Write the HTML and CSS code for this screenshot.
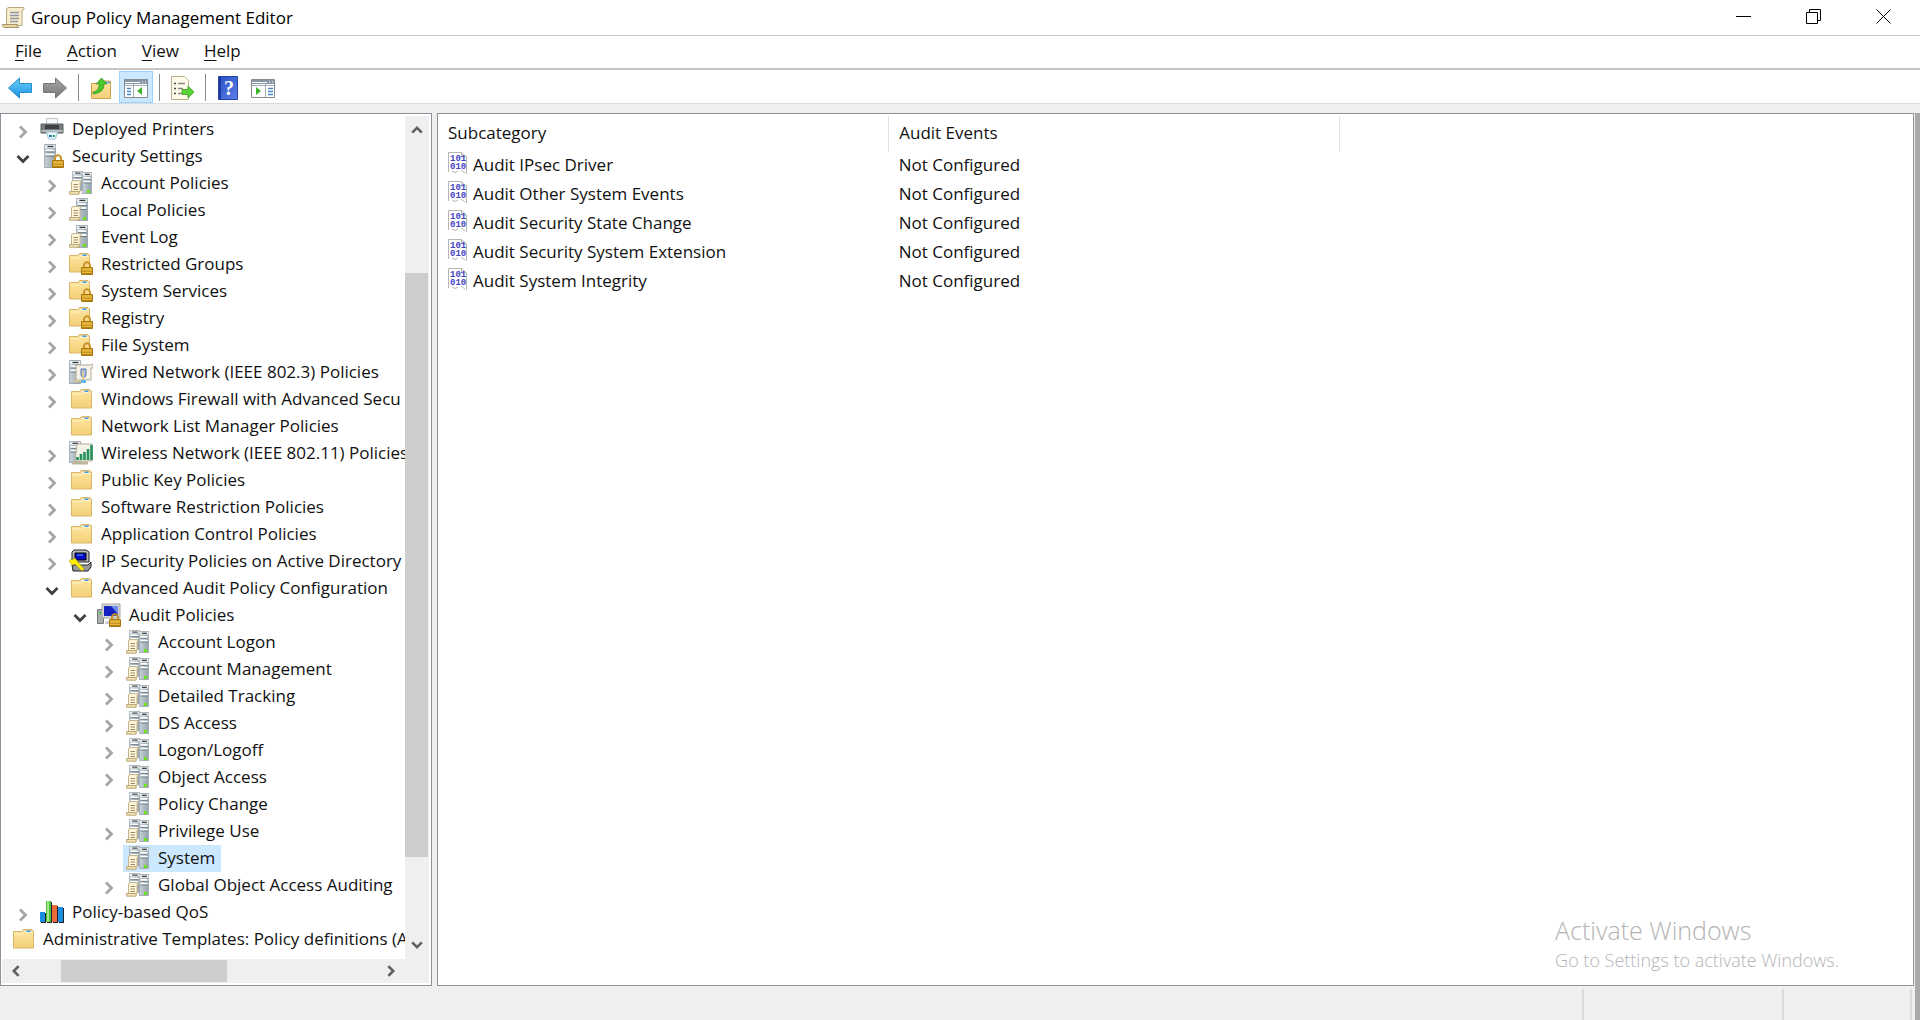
FILE: index.html
```html
<!DOCTYPE html>
<html lang="en">
<head>
<meta charset="utf-8">
<title>Group Policy Management Editor</title>
<link rel="stylesheet" href="styles.css">
</head>
<body>
<svg class="sprite" aria-hidden="true">
  <defs>
    <linearGradient id="gFolder" x1="0" y1="0" x2="0" y2="1"><stop offset="0" stop-color="#ffe6a0"/><stop offset="1" stop-color="#f3cf78"/></linearGradient>
    <linearGradient id="gServer" x1="0" y1="0" x2="1" y2="0"><stop offset="0" stop-color="#c9d3da"/><stop offset="1" stop-color="#93a2ab"/></linearGradient>
    <linearGradient id="gLock" x1="0" y1="0" x2="0" y2="1"><stop offset="0" stop-color="#e9b83a"/><stop offset="1" stop-color="#b07a08"/></linearGradient>
    <linearGradient id="gBack" x1="0" y1="0" x2="0" y2="1"><stop offset="0" stop-color="#6fd0fb"/><stop offset="1" stop-color="#1592e0"/></linearGradient>
    <linearGradient id="gFwd" x1="0" y1="0" x2="0" y2="1"><stop offset="0" stop-color="#a6a6a6"/><stop offset="1" stop-color="#777"/></linearGradient>
    <linearGradient id="gHelp" x1="0" y1="0" x2="1" y2="1"><stop offset="0" stop-color="#2a50c8"/><stop offset="1" stop-color="#5c80e6"/></linearGradient>
  </defs>
  <symbol id="right" viewBox="0 0 16 16"><path d="M5 2.500 10.500 8 5 13.500" fill="none" stroke="#a6a6a6" stroke-width="2.800"/></symbol>
  <symbol id="down" viewBox="0 0 16 16"><path d="M2.500 5 8 10.500 13.500 5" fill="none" stroke="#404040" stroke-width="2.800"/></symbol>
  <symbol id="lock" viewBox="0 0 12 14"><path d="M3 7V4.500a3 3.200 0 0 1 6 0V7" fill="none" stroke="#c9952a" stroke-width="2"/><path d="M.5 6.500h11v7H.5z" fill="url(#gLock)" stroke="#a87610"/><path d="M1 9h10M1 11.500h10" stroke="#f0c850" stroke-width=".8"/></symbol>
  <symbol id="folder" viewBox="0 0 24 24"><path d="M2.500 4.500h8l2-2h8.500l1.500 1.500v17h-20z" fill="url(#gFolder)" stroke="#d9b566"/><path d="M12 3.500h8.500l1 1.500H11z" fill="#fff" stroke="#d9b566" stroke-width=".5"/><path d="M15.500 4.300h4" stroke="#3f9bea" stroke-width="1.600"/><path d="M3 7h9l2-1.500h8" fill="none" stroke="#fff1c4"/></symbol>
  <symbol id="folder-lock" viewBox="0 0 24 24"><use href="#folder" x="-2" y="-1" width="24" height="24"/><use href="#lock" x="12" y="9" width="12" height="14"/></symbol>
  <symbol id="tower" viewBox="0 0 14 24" preserveAspectRatio="none"><path d="M.5.500h13v23H.5z" fill="url(#gServer)" stroke="#9aa6ad"/><path d="M1 1h12v3H1z" fill="#edf1f3"/><path d="M4 2.500h7" stroke="#333" stroke-width="1.300"/><path d="M2 6.500h10M2 10.500h10" stroke="#fff" stroke-width="2"/><path d="M2 8h10M2 12h10" stroke="#5e7079"/></symbol>
  <symbol id="scroll" viewBox="0 0 13 15"><path d="M3.500.600h8.500v1.600h-1V12H2.500V2z" fill="#fff7dc" stroke="#c4b48c"/><path d="M.6 11.500h9.500v2.700H.6z" fill="#f3e3b4" stroke="#b9a878"/><path d="M4.500 4.500h4.500M4.500 7h4.500M4.500 9.500h4.500" stroke="#9e8960"/></symbol>
  <symbol id="printer" viewBox="0 0 24 24"><path d="M6.500 1.500h11v7h-11z" fill="#f7f7f7" stroke="#c4c4c4"/><path d="M1 7h22v9H1z" fill="#777c80" stroke="#5c6064"/><path d="M5 8h14v4H5z" fill="#3b3f42"/><path d="M1.500 14h21" stroke="#b7bbbe" stroke-width="2"/><path d="M6.500 15h11l-2 7h-7z" fill="#eaf6fd" stroke="#9fc4da"/><path d="M9 18h3v2H9z" fill="#1b75bb"/><path d="M13 18h2v2h-2z" fill="#2aa84a"/></symbol>
  <symbol id="server-lock" viewBox="0 0 24 24"><use href="#tower" x="4" y="0" width="12" height="24"/><use href="#lock" x="12" y="10" width="12" height="14"/></symbol>
  <symbol id="servers" viewBox="0 0 24 24"><use href="#tower" x="3" y="0" width="11" height="20"/><use href="#tower" x="13" y="1" width="10" height="22"/><path d="M18 20.500h3" stroke="#6be314" stroke-width="3"/><use href="#scroll" x="0" y="9" width="13" height="15"/></symbol>
  <symbol id="server" viewBox="0 0 24 24"><use href="#tower" x="7" y="0" width="12" height="23"/><path d="M14 20.500h3" stroke="#6be314" stroke-width="3"/><use href="#scroll" x="0" y="8" width="13" height="15"/></symbol>
  <symbol id="wired" viewBox="0 0 24 24"><use href="#tower" x="0" y="0" width="12" height="24"/><path d="M7 5h14l3-1v4h-2v12H7z" fill="#f4f1e6" stroke="#b3ab97"/><path d="M12 9h5v6l-1 2h-3l-1-2z" fill="#a7bfe3" stroke="#5d79a8"/><path d="M14 11v9M5 21h10" stroke="#d6c79a" stroke-width="2"/><path d="M12 20h5v3h-5z" fill="#62b8e3"/></symbol>
  <symbol id="wireless" viewBox="0 0 24 24"><use href="#tower" x="0" y="0" width="12" height="22"/><path d="M8 3h15v17H6z" fill="#f4f1e6" stroke="#b3ab97"/><path d="M8.500 19v-3M12 19v-6M15.500 19V11M19 19V8M22.500 19V4" stroke="#25915a" stroke-width="2.600"/><path d="M3 22h16" stroke="#bdb49c" stroke-width="3"/></symbol>
  <symbol id="ipsec" viewBox="0 0 24 24"><path d="M5 1h12l3 2v10H3V3z" fill="#b9b9b9" stroke="#222"/><path d="M6 4h11v7H6z" fill="#0808c8" stroke="#000"/><path d="M8 6h6" stroke="#57a8ff"/><path d="M3 16h16l3-3v5l-3 4H4z" fill="#999" stroke="#222"/><path d="m0 12 2-2 1 1 3-2 2 3 7 8-2 2-7-7-3 1z" fill="#ffee00" stroke="#b0a000" stroke-width=".6"/></symbol>
  <symbol id="audit" viewBox="0 0 24 24"><path d="M.5 6.500h6v14h-6z" fill="#a9aeb1" stroke="#777"/><path d="M2 10h2" stroke="#3ec23e" stroke-width="2"/><path d="M5 1h18v14H5z" fill="#d6d6d6" stroke="#a5a5a5"/><path d="M7 3h14v10H7z" fill="#1422c0"/><path d="M14 3h7v8z" fill="#6d8cf0"/><path d="M9 18h6v3H8z" fill="#ccc"/><use href="#lock" x="12" y="10" width="12" height="14"/></symbol>
  <symbol id="qos" viewBox="0 0 24 24"><path d="M1 13h5v10H1zM7 2h5v21H7zM13 6h5v17h-5zM19 8h5v15h-5z" fill="#222"/><path d="M0 12h5v10H0z" fill="#1c8ee0"/><path d="M6 1h5v21H6z" fill="#4fc03f"/><path d="M7 1h2v21H7z" fill="#a2e68b"/><path d="M12 5h5v17h-5z" fill="#ef6a3a"/><path d="M18 7h5v15h-5z" fill="#1c8ee0"/></symbol>
  <symbol id="binary" viewBox="0 0 20 22"><path d="M.5 20V.500h13l5 4.500V22" fill="#fff" stroke="#b5b5b5"/><path d="M13.500.500V5h5M4 19l3 1.500 3-1.500M13 18l4 3" fill="none" stroke="#b5b5b5"/><text class="bits" x="2" y="9">101</text><text class="bits" x="2" y="17">010</text></symbol>
</svg>

<header class="titlebar">
  <svg class="app-icon" viewBox="0 0 24 24"><path d="M8 1.500h14c2 0 1 3-1 3v15H5.500v-15C5.500 2.500 6.500 1.500 8 1.500z" fill="#f7edcb" stroke="#b5a57c"/><path d="M1.500 18.500h15c-1 1 0 3 1.500 3h-14c-2 0-3-1.500-2.500-3z" fill="#e8d6a0" stroke="#a8966a"/><path d="M9 6.500h9M9 9.500h9M9 12.500h9M9 15.500h8" stroke="#8f93a5" stroke-width="1.300"/></svg>
  <h1>Group Policy Management Editor</h1>
  <div class="window-controls">
    <button aria-label="Minimize"><svg viewBox="0 0 16 16"><path d="M0 7.500h15" stroke="#000"/></svg></button>
    <button aria-label="Restore"><svg viewBox="0 0 16 16"><path d="M.5 3.500h11v11H.5zM3.500 3V.500h11v11H12" fill="none" stroke="#000"/></svg></button>
    <button aria-label="Close"><svg viewBox="0 0 16 16"><path d="m.5.500 14 14m0-14-14 14" stroke="#000"/></svg></button>
  </div>
</header>

<nav class="menubar">
  <button><u>F</u>ile</button>
  <button><u>A</u>ction</button>
  <button><u>V</u>iew</button>
  <button><u>H</u>elp</button>
</nav>

<div class="toolbar" role="toolbar">
  <button aria-label="Back"><svg viewBox="0 0 26 24"><path d="M1.500 12 12.500 2v5.500h12v9h-12V22z" fill="url(#gBack)" stroke="#2a8cc8"/></svg></button>
  <button aria-label="Forward"><svg viewBox="0 0 26 24"><path d="M24.500 12 13.500 2v5.500h-12v9h12V22z" fill="url(#gFwd)" stroke="#777"/></svg></button>
  <span class="divider"></span>
  <button aria-label="Up one level"><svg viewBox="0 0 26 24"><path d="M3.500 7.500h9l2-2.500h8v17.500h-19z" fill="url(#gFolder)" stroke="#cda24a"/><path d="M17 6.500h5" stroke="#4a9de8" stroke-width="1.500"/><path d="M5 16c5-1 6-4 6-8H8l5.500-6L19 8h-3c0 7-4 9-11 10z" fill="#4ac52a" stroke="#34931c" stroke-width=".7"/></svg></button>
  <button class="pressed" aria-label="Show or hide console tree" aria-pressed="true"><svg viewBox="0 0 26 24"><path d="M1.500 3.500h23v18h-23z" fill="#fff" stroke="#858c96"/><path d="M2 4h22v4H2z" fill="#8a95a3"/><path d="M2 6.500h15M19 6h1M22 6h1" stroke="#fff"/><path d="M10.500 8v13M2 9.500h22" stroke="#a3abb5"/><path d="M4 12.500h4M4 15.500h4M4 18.500h4" stroke="#4d86c4" stroke-width="1.500"/><path d="M19 11v8l-5-4z" fill="#3db528"/></svg></button>
  <span class="divider"></span>
  <button aria-label="Export list"><svg viewBox="0 0 26 24"><path d="M2.500.500h13l4 4v19h-17z" fill="#fffbea" stroke="#bbb08d"/><path d="M5 7.500h2M5 12.500h2M5 17.500h2" stroke="#444" stroke-width="1.500"/><path d="M9 7.500h7M9 12.500h5M9 17.500h5" stroke="#888" stroke-width="1.300"/><path d="M13 13.500h6V10l6 6-6 6v-3.500h-6z" fill="#5bd13a" stroke="#38a020" stroke-width=".8"/></svg></button>
  <span class="divider"></span>
  <button aria-label="Help"><svg viewBox="0 0 26 24"><path d="M3.500.500h19v23h-19z" fill="url(#gHelp)" stroke="#2444a8"/><path d="M5 1v22" stroke="#1d3a9c" stroke-width="2"/><text class="question" x="14" y="19">?</text></svg></button>
  <button aria-label="Show or hide action pane"><svg viewBox="0 0 26 24"><path d="M1.500 3.500h23v18h-23z" fill="#fff" stroke="#858c96"/><path d="M2 4h22v4H2z" fill="#8a95a3"/><path d="M2 6.500h15M19 6h1M22 6h1" stroke="#fff"/><path d="M15.500 8v13M2 9.500h22" stroke="#a3abb5"/><path d="M18 12.500h5M18 15.500h5M18 18.500h5" stroke="#4d86c4" stroke-width="1.500"/><path d="M6 11v8l5-4z" fill="#3db528"/></svg></button>
</div>

<main class="workspace">
  <section class="pane tree-pane">
    <ul class="tree" role="tree">
      <li class="l0"><svg class="tw"><use href="#right"/></svg><span class="node"><svg><use href="#printer"/></svg>Deployed Printers</span></li>
      <li class="l0"><svg class="tw"><use href="#down"/></svg><span class="node"><svg><use href="#server-lock"/></svg>Security Settings</span></li>
      <li class="l1"><svg class="tw"><use href="#right"/></svg><span class="node"><svg><use href="#servers"/></svg>Account Policies</span></li>
      <li class="l1"><svg class="tw"><use href="#right"/></svg><span class="node"><svg><use href="#server"/></svg>Local Policies</span></li>
      <li class="l1"><svg class="tw"><use href="#right"/></svg><span class="node"><svg><use href="#server"/></svg>Event Log</span></li>
      <li class="l1"><svg class="tw"><use href="#right"/></svg><span class="node"><svg><use href="#folder-lock"/></svg>Restricted Groups</span></li>
      <li class="l1"><svg class="tw"><use href="#right"/></svg><span class="node"><svg><use href="#folder-lock"/></svg>System Services</span></li>
      <li class="l1"><svg class="tw"><use href="#right"/></svg><span class="node"><svg><use href="#folder-lock"/></svg>Registry</span></li>
      <li class="l1"><svg class="tw"><use href="#right"/></svg><span class="node"><svg><use href="#folder-lock"/></svg>File System</span></li>
      <li class="l1"><svg class="tw"><use href="#right"/></svg><span class="node"><svg><use href="#wired"/></svg>Wired Network (IEEE 802.3) Policies</span></li>
      <li class="l1"><svg class="tw"><use href="#right"/></svg><span class="node"><svg><use href="#folder"/></svg>Windows Firewall with Advanced Secu</span></li>
      <li class="l1"><svg class="tw"></svg><span class="node"><svg><use href="#folder"/></svg>Network List Manager Policies</span></li>
      <li class="l1"><svg class="tw"><use href="#right"/></svg><span class="node"><svg><use href="#wireless"/></svg>Wireless Network (IEEE 802.11) Policies</span></li>
      <li class="l1"><svg class="tw"><use href="#right"/></svg><span class="node"><svg><use href="#folder"/></svg>Public Key Policies</span></li>
      <li class="l1"><svg class="tw"><use href="#right"/></svg><span class="node"><svg><use href="#folder"/></svg>Software Restriction Policies</span></li>
      <li class="l1"><svg class="tw"><use href="#right"/></svg><span class="node"><svg><use href="#folder"/></svg>Application Control Policies</span></li>
      <li class="l1"><svg class="tw"><use href="#right"/></svg><span class="node"><svg><use href="#ipsec"/></svg>IP Security Policies on Active Directory</span></li>
      <li class="l1"><svg class="tw"><use href="#down"/></svg><span class="node"><svg><use href="#folder"/></svg>Advanced Audit Policy Configuration</span></li>
      <li class="l2"><svg class="tw"><use href="#down"/></svg><span class="node"><svg><use href="#audit"/></svg>Audit Policies</span></li>
      <li class="l3"><svg class="tw"><use href="#right"/></svg><span class="node"><svg><use href="#servers"/></svg>Account Logon</span></li>
      <li class="l3"><svg class="tw"><use href="#right"/></svg><span class="node"><svg><use href="#servers"/></svg>Account Management</span></li>
      <li class="l3"><svg class="tw"><use href="#right"/></svg><span class="node"><svg><use href="#servers"/></svg>Detailed Tracking</span></li>
      <li class="l3"><svg class="tw"><use href="#right"/></svg><span class="node"><svg><use href="#servers"/></svg>DS Access</span></li>
      <li class="l3"><svg class="tw"><use href="#right"/></svg><span class="node"><svg><use href="#servers"/></svg>Logon/Logoff</span></li>
      <li class="l3"><svg class="tw"><use href="#right"/></svg><span class="node"><svg><use href="#servers"/></svg>Object Access</span></li>
      <li class="l3"><svg class="tw"></svg><span class="node"><svg><use href="#servers"/></svg>Policy Change</span></li>
      <li class="l3"><svg class="tw"><use href="#right"/></svg><span class="node"><svg><use href="#servers"/></svg>Privilege Use</span></li>
      <li class="l3"><svg class="tw"></svg><span class="node selected"><svg><use href="#servers"/></svg>System</span></li>
      <li class="l3"><svg class="tw"><use href="#right"/></svg><span class="node"><svg><use href="#servers"/></svg>Global Object Access Auditing</span></li>
      <li class="l0"><svg class="tw"><use href="#right"/></svg><span class="node"><svg><use href="#qos"/></svg>Policy-based QoS</span></li>
      <li class="l0"><span class="node"><svg><use href="#folder"/></svg>Administrative Templates: Policy definitions (A</span></li>
    </ul>
    <div class="vscroll">
      <button aria-label="Scroll up"><svg viewBox="0 0 16 16"><path d="M2.500 11 8 5.500l5.500 5.500" fill="none" stroke="#606060" stroke-width="3"/></svg></button>
      <div class="track"><div class="thumb"></div></div>
      <button aria-label="Scroll down"><svg viewBox="0 0 16 16"><path d="M2.500 5 8 10.500 13.500 5" fill="none" stroke="#606060" stroke-width="3"/></svg></button>
    </div>
    <div class="hscroll">
      <button aria-label="Scroll left"><svg viewBox="0 0 16 16"><path d="M11 2.500 5.500 8l5.500 5.500" fill="none" stroke="#606060" stroke-width="3"/></svg></button>
      <div class="track"><div class="thumb"></div></div>
      <button aria-label="Scroll right"><svg viewBox="0 0 16 16"><path d="M5 2.500 10.500 8 5 13.500" fill="none" stroke="#606060" stroke-width="3"/></svg></button>
    </div>
  </section>

  <section class="pane list-pane">
    <table>
      <thead><tr><th>Subcategory</th><th>Audit Events</th></tr></thead>
      <tbody>
        <tr><td><span class="entry"><svg><use href="#binary"/></svg>Audit IPsec Driver</span></td><td>Not Configured</td></tr>
        <tr><td><span class="entry"><svg><use href="#binary"/></svg>Audit Other System Events</span></td><td>Not Configured</td></tr>
        <tr><td><span class="entry"><svg><use href="#binary"/></svg>Audit Security State Change</span></td><td>Not Configured</td></tr>
        <tr><td><span class="entry"><svg><use href="#binary"/></svg>Audit Security System Extension</span></td><td>Not Configured</td></tr>
        <tr><td><span class="entry"><svg><use href="#binary"/></svg>Audit System Integrity</span></td><td>Not Configured</td></tr>
      </tbody>
    </table>
    <aside class="watermark">
      <p class="big">Activate Windows</p>
      <p>Go to Settings to activate Windows.</p>
    </aside>
  </section>
</main>

<footer class="statusbar"><span class="main-cell"></span><span class="mid-cell"></span><span class="end-cell"></span></footer>
</body>
</html>
```

FILE: styles.css
```css
* { box-sizing: border-box; }

body {
  margin: 0;
  min-height: 100vh;
  display: flex;
  flex-direction: column;
  background: #efefef;
  color: #111;
  font: 17px/20px "Open Sans", "Noto Sans", sans-serif;
}

button {
  padding: 0;
  border: 0;
  background: none;
  color: inherit;
  font: inherit;
}

svg { display: block; flex: none; }
.sprite { position: absolute; width: 0; height: 0; }
.bits { font: bold 9px "Liberation Mono", monospace; fill: #4343c4; }
.question { font: bold 20px "Liberation Serif", serif; fill: #fff; text-anchor: middle; }

/* Title bar */
.titlebar {
  height: 36px;
  display: flex;
  align-items: center;
  background: #fff;
  border-bottom: 1px solid #ccc;
}
.app-icon { width: 24px; height: 24px; margin: 0 6px 0 1px; }
.titlebar h1 {
  margin: 0;
  flex: 1;
  font-size: 17px;
  font-weight: 400;
  line-height: 24px;
  color: #000;
}
.window-controls { display: flex; margin-right: 1px; }
.window-controls button {
  width: 70px;
  height: 35px;
  padding-bottom: 2px;
  display: grid;
  place-items: center;
}
.window-controls svg { width: 16px; height: 16px; }

/* Menu bar */
.menubar {
  height: 34px;
  display: flex;
  align-items: center;
  padding: 0 3px 2px;
  background: #fff;
  border-bottom: 2px solid #c6c6c8;
}
.menubar button { padding: 0 13px 0 12px; }
.menubar u { text-underline-offset: 3px; }

/* Toolbar */
.toolbar {
  height: 34px;
  display: flex;
  align-items: center;
  gap: 1px;
  padding: 1px 3px 0;
  background: #fff;
  border-bottom: 1px solid #dadada;
}
.toolbar button {
  width: 34px;
  height: 32px;
  padding-top: 2px;
  display: grid;
  place-items: center;
}
.toolbar svg { width: 26px; height: 24px; }
.toolbar .pressed { background: #cce8ff; border: 1px solid #99d1ff; }
.divider { width: 10px; height: 27px; display: flex; justify-content: center; }
.divider::before { content: ""; width: 1px; background: #8a8a8a; }

/* Panes */
.workspace {
  flex: 1;
  display: flex;
  gap: 5px;
  padding-top: 9px;
  background: linear-gradient(#efefef 9px, #a9a9a9 9px) right / 5px 100% no-repeat, #efefef;
  padding-right: 6px;
}
.pane { background: #fff; border: 1px solid #8d919b; padding-top: 2px; }

.tree-pane {
  flex: none;
  width: 432px;
  display: grid;
  grid-template-columns: minmax(0, 1fr) 26px;
  grid-template-rows: minmax(0, 1fr) 24px;
  padding-bottom: 2px;
}
.tree {
  margin: 0;
  padding: 0;
  list-style: none;
  overflow: hidden;
}
.tree li {
  height: 27px;
  display: flex;
  align-items: center;
  white-space: nowrap;
}
.l0 { padding-left: 7px; }
.l1 { padding-left: 36px; }
.l2 { padding-left: 64px; }
.l3 { padding-left: 93px; }
.tw { width: 16px; height: 16px; margin: 4px 6px 0 7px; }
.node {
  height: 27px;
  display: flex;
  align-items: center;
  gap: 8px;
  padding: 0 6px 2px 3px;
}
.node svg { width: 24px; height: 24px; }
.selected { background: #cce8ff; }

.vscroll {
  grid-row: 1 / 3;
  grid-column: 2;
  display: flex;
  flex-direction: column;
  padding-bottom: 24px;
  background: #efefef;
  border-right: 2px solid #fff;
}
.vscroll button { height: 28px; display: grid; place-items: center; }
.vscroll .track, .hscroll .track { flex: 1; display: flex; }
.vscroll .track { flex-direction: column; padding: 129px 1px 74px 0; }
.thumb { flex: 1; background: #cdcdcd; }
.hscroll { display: flex; background: #efefef; border-left: 1px solid #fff; }
.hscroll button { width: 28px; display: grid; place-items: center; }
.hscroll .track { padding: 1px 150px 1px 31px; }
.vscroll svg, .hscroll svg { width: 14px; height: 14px; }

/* Result list */
.list-pane {
  flex: 1;
  display: flex;
  flex-direction: column;
  justify-content: space-between;
  align-items: flex-start;
}
table { border-collapse: collapse; table-layout: fixed; width: 902px; }
th {
  height: 36px;
  padding: 0 10px 2px;
  border-right: 1px solid #e2e2e2;
  text-align: left;
  font-weight: 400;
}
td { height: 29px; padding: 0 10px 3px; }
.entry { display: flex; align-items: center; gap: 5px; height: 20px; }
.entry svg { width: 20px; height: 22px; margin-top: -4px; }

.watermark { align-self: flex-end; margin: 0 74px 12px 0; color: #b4b4b4; font-weight: 300; }
.watermark p { margin: 0; font-size: 18px; line-height: 26px; }
.watermark .big { font-size: 25px; line-height: 34px; }

/* Status bar */
.statusbar {
  height: 34px;
  display: flex;
  padding: 3px 8px 0 0;
  background: linear-gradient(#a9a9a9, #a9a9a9) right / 5px 100% no-repeat;
}
.statusbar span { border-right: 2px solid #d9d9d9; }
.main-cell { flex: 1; }
.mid-cell { width: 200px; }
.end-cell { width: 128px; }
```
